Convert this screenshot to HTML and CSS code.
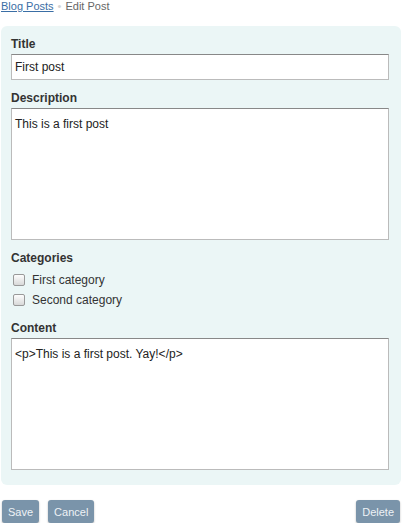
FILE: index.html
```html
<!DOCTYPE html>
<html>
<head>
<meta charset="utf-8">
<link rel="stylesheet" href="styles.css">
</head>
<body>
<div class="breadcrumb"><a href="#">Blog Posts</a><span class="sep">•</span><span class="current">Edit Post</span></div>
<form class="panel">
  <label class="label">Title</label>
  <input class="field" type="text" value="First post">
  <label class="label">Description</label>
  <textarea class="area">This is a first post</textarea>
  <label class="label">Categories</label>
  <div class="checks">
    <label class="check"><input type="checkbox" class="box"><span>First category</span></label>
    <label class="check"><input type="checkbox" class="box"><span>Second category</span></label>
  </div>
  <label class="label">Content</label>
  <textarea class="area">&lt;p&gt;This is a first post. Yay!&lt;/p&gt;</textarea>
</form>
<div class="actions">
  <div class="left">
    <button class="btn" type="button">Save</button>
    <button class="btn" type="button">Cancel</button>
  </div>
  <button class="btn" type="button">Delete</button>
</div>
</body>
</html>
```
FILE: styles.css
```css
html, body {
  margin: 0;
  padding: 0;
  background: #fff;
}
body {
  font-family: "Liberation Sans", Arial, sans-serif;
  font-size: 12px;
  color: #333;
  width: 405px;
}
.breadcrumb {
  font-size: 11px;
  line-height: 13px;
  padding: 0 0 0 1px;
  height: 13px;
  color: #666;
}
.breadcrumb a {
  color: #3a6ea5;
  text-decoration: underline;
}
.breadcrumb .sep {
  color: #d4d4d4;
  font-size: 11px;
  margin: 0 4px;
}
.panel {
  margin: 13px 4px 0 1px;
  background: #ebf6f6;
  border-radius: 6px;
  padding: 10px 12px 15px 10px;
  display: flex;
  flex-direction: column;
}
.label {
  display: block;
  font-weight: bold;
  font-size: 12px;
  line-height: 16px;
  color: #333;
  margin-bottom: 2px;
}
.field, .area {
  box-sizing: border-box;
  width: 378px;
  margin: 0 0 10px 0;
  border: 1px solid #bbb;
  border-top: 1px solid #888;
  background: #fff;
  font-family: "Liberation Sans", Arial, sans-serif;
  font-size: 12px;
  color: #222;
  outline: none;
}
.field {
  height: 26px;
  padding: 0 3px;
}
.area {
  height: 132px;
  padding: 8px 3px;
  resize: none;
  line-height: 15px;
}
.area:last-child {
  margin-bottom: 0;
}
.checks {
  display: flex;
  flex-direction: column;
  margin: 2px 0 10px 0;
}
.check {
  display: flex;
  align-items: center;
  height: 20px;
  font-size: 12px;
  color: #333;
}
.box {
  appearance: none;
  -webkit-appearance: none;
  box-sizing: border-box;
  width: 12px;
  height: 12px;
  margin: 0 7px 0 2px;
  border: 1px solid #999;
  border-radius: 2px;
  background: linear-gradient(#fdfdfd, #d8d8d8);
}
.actions {
  display: flex;
  justify-content: space-between;
  align-items: center;
  margin: 15px 5px 0 2px;
}
.left {
  display: flex;
  gap: 9px;
}
.btn {
  font-family: "Liberation Sans", Arial, sans-serif;
  font-size: 11px;
  height: 23px;
  padding: 0 6px;
  border: none;
  border-radius: 3px;
  background: #7a94aa;
  color: #eef2f6;
  box-shadow: 0 1px 2px rgba(0,0,0,0.3);
}
```
